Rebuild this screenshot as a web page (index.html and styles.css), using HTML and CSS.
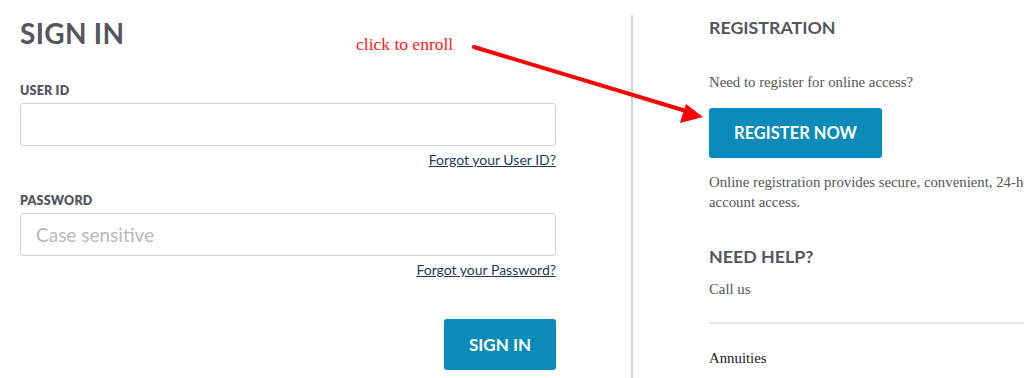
FILE: index.html
```html
<!DOCTYPE html>
<html>
<head>
<meta charset="utf-8">
<link rel="stylesheet" href="styles.css">
</head>
<body>
<div class="page">
  <section class="signin">
    <h1 class="title">SIGN IN</h1>
    <label class="label label-user">USER ID</label>
    <div class="input"></div>
    <div class="forgot"><a href="#">Forgot your User ID?</a></div>
    <label class="label label-pass">PASSWORD</label>
    <div class="input"><span class="placeholder">Case sensitive</span></div>
    <div class="forgot"><a href="#">Forgot your Password?</a></div>
    <div class="actions"><button class="btn btn-signin">SIGN IN</button></div>
  </section>
  <div class="divider"></div>
  <section class="register">
    <h2 class="subtitle">REGISTRATION</h2>
    <p class="text text-need">Need to register for online access?</p>
    <button class="btn btn-register">REGISTER NOW</button>
    <p class="text text-online">Online registration provides secure, convenient, 24-hour<br>account access.</p>
    <h2 class="subtitle subtitle-help">NEED HELP?</h2>
    <p class="text text-call">Call us</p>
    <hr class="rule">
    <p class="text text-annuities">Annuities</p>
  </section>
  <div class="note">click to enroll</div>
  <svg class="arrow" width="1024" height="378" viewBox="0 0 1024 378">
    <line x1="474" y1="47" x2="686" y2="111" stroke="#ff0000" stroke-width="4" stroke-linecap="round"/>
    <polygon points="703,117 680,123 686,104" fill="#ff0000"/>
  </svg>
</div>
</body>
</html>
```
FILE: styles.css
```css
html, body {
  margin: 0;
  padding: 0;
  background: #ffffff;
  overflow: hidden;
}
.page {
  position: relative;
  display: flex;
  width: 1024px;
  height: 378px;
  overflow: hidden;
  font-family: Lato, "Open Sans", sans-serif;
}
.signin {
  width: 536px;
  flex-shrink: 0;
  margin-left: 20px;
  display: flex;
  flex-direction: column;
}
.title {
  margin: 19px 0 0 0;
  font-size: 28px;
  line-height: 28px;
  font-weight: 700;
  color: #53565e;
  letter-spacing: 0.3px;
}
.label {
  display: block;
  font-size: 12.5px;
  font-weight: 800;
  color: #53565e;
  line-height: 14px;
  letter-spacing: 0.2px;
}
.label-user { margin-top: 37px; }
.label-pass { margin-top: 26px; }
.input {
  box-sizing: border-box;
  height: 43px;
  margin-top: 5px;
  border: 1px solid #cfcfcf;
  border-radius: 3px;
  display: flex;
  align-items: center;
  padding-left: 15px;
}
.placeholder {
  font-size: 19px;
  color: #b8b8b8;
}
.forgot {
  text-align: right;
  margin-top: 6px;
  font-size: 14px;
  line-height: 16px;
}
.forgot a {
  color: #1f3a5a;
  text-decoration: underline;
}
.actions {
  display: flex;
  justify-content: flex-end;
  margin-top: 41px;
}
.btn {
  border: none;
  background: #0b8bba;
  color: #ffffff;
  font-family: Lato, "Open Sans", sans-serif;
  font-weight: 700;
  border-radius: 3px;
  padding: 0;
  cursor: pointer;
}
.btn-signin {
  width: 112px;
  height: 51px;
  font-size: 17px;
}
.divider {
  width: 2px;
  flex-shrink: 0;
  background: #d2d2d2;
  margin: 15px 0 0 75px;
  height: 363px;
}
.register {
  margin-left: 76px;
  width: 420px;
  flex-shrink: 0;
  display: flex;
  flex-direction: column;
  align-items: flex-start;
}
.subtitle {
  margin: 17px 0 0 0;
  font-size: 17.8px;
  line-height: 20px;
  font-weight: 700;
  color: #53565e;
  letter-spacing: 0;
}
.subtitle-help { margin-top: 34px; }
.text {
  margin: 0;
  font-family: "Liberation Serif", serif;
  font-size: 14.8px;
  line-height: 20px;
  color: #555555;
  white-space: nowrap;
}
.text-need { margin-top: 35px; }
.btn-register {
  margin-top: 16px;
  width: 173px;
  height: 50px;
  font-size: 16.5px;
}
.text-online { margin-top: 14px; }
.text-call { margin-top: 13px; }
.rule {
  width: 100%;
  margin: 23px 0 0 0;
  border: none;
  border-top: 2px solid #e8e8e8;
  height: 0;
}
.text-annuities {
  margin-top: 24px;
  color: #222222;
}
.note {
  position: absolute;
  left: 356px;
  top: 34px;
  font-family: "Liberation Serif", serif;
  font-size: 17.5px;
  color: #ff1a1a;
}
.arrow {
  position: absolute;
  left: 0;
  top: 0;
  pointer-events: none;
}
```
